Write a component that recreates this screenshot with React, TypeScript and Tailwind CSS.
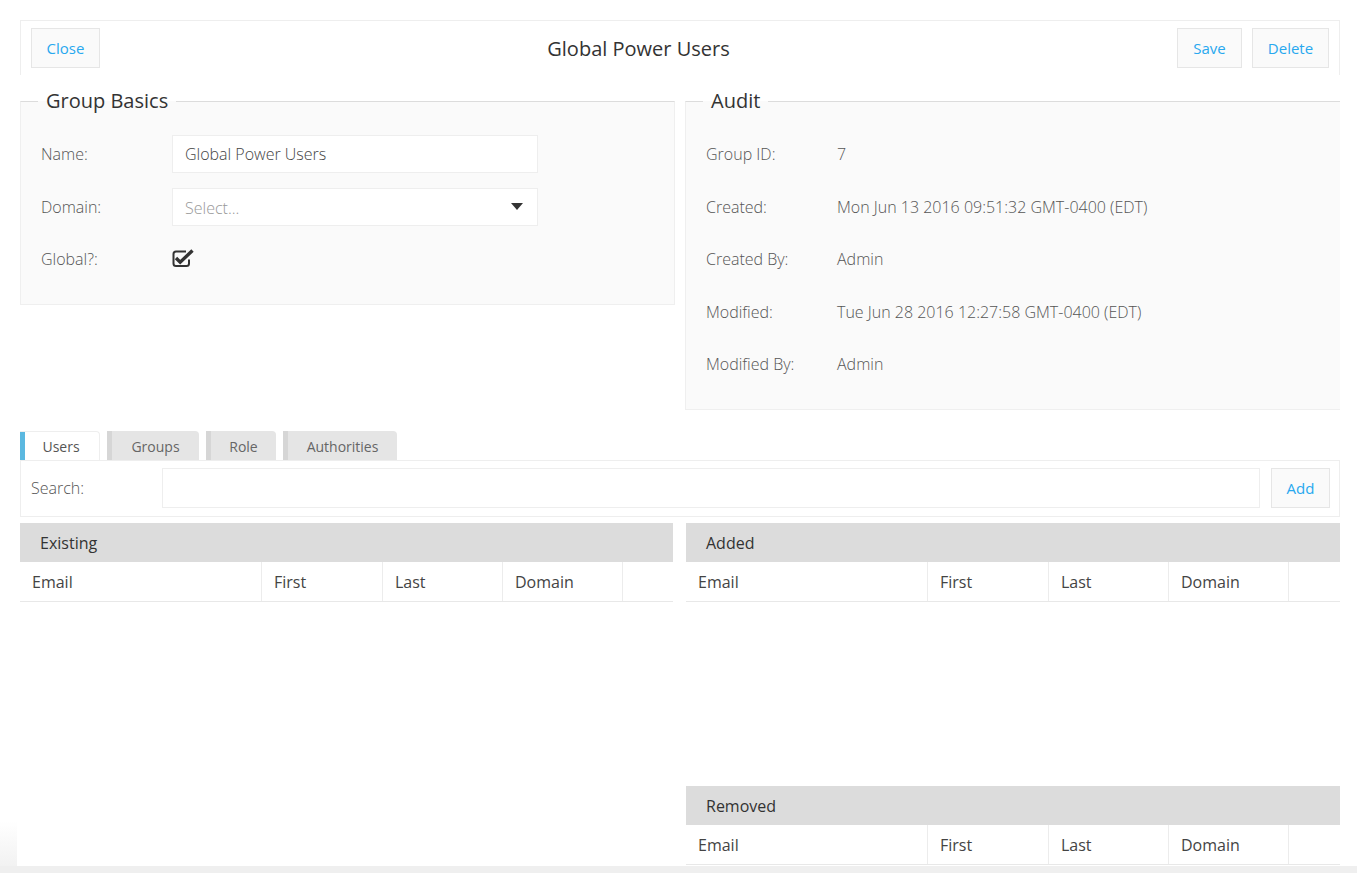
import React from "react";

const blue = "text-[#28a8ef]";

function Btn({ children, w }: { children: React.ReactNode; w: string }) {
  return (
    <button
      className={`h-[40px] ${w} border border-[#e6e6e6] bg-[#fafafa] text-[15px] ${blue} flex items-center justify-center`}
    >
      {children}
    </button>
  );
}

function CheckSquare() {
  return (
    <svg width="22" height="18" viewBox="0 0 22 18">
      <path
        d="M14 2.5 H4 Q1.5 2.5 1.5 5 V14.5 Q1.5 17 4 17 H14.5 Q17 17 17 14.5 V10.5"
        fill="none"
        stroke="#333"
        strokeWidth="2"
      />
      <path d="M4 9 L8.2 13.2 L20.5 1.5" fill="none" stroke="#333" strokeWidth="3.4" />
    </svg>
  );
}

function Row({ label, children }: { label: string; children: React.ReactNode }) {
  return (
    <div className="flex items-center h-[52.5px]">
      <div className="w-[131px] shrink-0 text-[16px] font-light text-[#555]">{label}</div>
      <div className="flex-1 flex items-center">{children}</div>
    </div>
  );
}

function Table({ title }: { title: string }) {
  const cols = [
    { t: "Email", w: "w-[242px]" },
    { t: "First", w: "w-[121px]" },
    { t: "Last", w: "w-[120px]" },
    { t: "Domain", w: "w-[120px]" },
  ];
  return (
    <div className="flex flex-col">
      <div className="h-[39px] bg-[#dcdcdc] flex items-center pl-5 pt-[1px] text-[16px] text-[#333]">{title}</div>
      <div className="h-[40px] flex border-b border-[#e8e8e8] bg-white">
        {cols.map((c) => (
          <div key={c.t} className={`${c.w} border-r border-[#ececec] flex items-center pl-3 pt-[2px] text-[16px] text-[#444]`}>
            {c.t}
          </div>
        ))}
        <div className="flex-1" />
      </div>
    </div>
  );
}

export default function App() {
  return (
    <div
      className="relative w-[1357px] h-[873px] overflow-hidden bg-white pl-5 pr-[17px] pt-5"
      style={{ fontFamily: "'Open Sans', 'Noto Sans', sans-serif" }}
    >
      {/* Header */}
      <div className="h-[55px] border-t border-x border-[#eeeeee] flex items-start pt-[7px] px-[10px] relative">
        <Btn w="w-[69px]">Close</Btn>
        <div className="flex-1 text-center text-[20px] text-[#333] mt-[6px]">Global Power Users</div>
        <div className="flex gap-[10px]">
          <Btn w="w-[65px]">Save</Btn>
          <Btn w="w-[77px]">Delete</Btn>
        </div>
      </div>

      {/* Fieldsets */}
      <div className="flex gap-[10px] items-start mt-[13px]">
        <fieldset className="w-[655px] shrink-0 border border-[#efefef] border-t-[#dcdcdc] bg-[#fafafa] pl-5 pr-[136px] pt-[14px] pb-[18px] m-0 min-w-0">
          <legend className="ml-[-3px] px-2 text-[20px] text-[#333] leading-[26px]">Group Basics</legend>
          <Row label="Name:">
            <div className="w-full h-[38px] bg-white border border-[#eeeeee] flex items-center pl-3 text-[16px] font-light text-[#444]">
              Global Power Users
            </div>
          </Row>
          <Row label="Domain:">
            <div className="w-full h-[38px] bg-white border border-[#eeeeee] flex items-center pl-3 pr-[14px] text-[16px] font-light text-[#999]">
              <span className="flex-1 pt-[3px]">Select...</span>
              <svg width="12" height="7" viewBox="0 0 12 7">
                <path d="M0 0 H12 L6 7 Z" fill="#333" />
              </svg>
            </div>
          </Row>
          <Row label="Global?:">
            <div className="mt-[-3px]">
              <CheckSquare />
            </div>
          </Row>
        </fieldset>

        <fieldset className="flex-1 border border-[#efefef] border-t-[#dcdcdc] border-r-0 bg-[#fafafa] pl-5 pr-5 pt-[14px] pb-[18px] m-0 min-w-0">
          <legend className="ml-[-3px] px-2 text-[20px] text-[#333] leading-[26px]">Audit</legend>
          <Row label="Group ID:"><span className="text-[16px] font-light text-[#555]">7</span></Row>
          <Row label="Created:"><span className="text-[16px] font-light text-[#555]">Mon Jun 13 2016 09:51:32 GMT-0400 (EDT)</span></Row>
          <Row label="Created By:"><span className="text-[16px] font-light text-[#555]">Admin</span></Row>
          <Row label="Modified:"><span className="text-[16px] font-light text-[#555]">Tue Jun 28 2016 12:27:58 GMT-0400 (EDT)</span></Row>
          <Row label="Modified By:"><span className="text-[16px] font-light text-[#555]">Admin</span></Row>
        </fieldset>
      </div>

      {/* Tabs */}
      <div className="flex gap-[7px] mt-[21px] h-[29px] items-end">
        <div className="h-[29px] w-[80px] bg-white border-t border-r border-[#eeeeee] rounded-tr-[4px] flex items-center">
          <div className="w-[5px] h-full bg-[#5bb8e0]" />
          <span className="flex-1 text-center text-[14px] text-[#555] pr-[2px] pt-[2px]">Users</span>
        </div>
        {[
          { t: "Groups", w: "w-[92px]" },
          { t: "Role", w: "w-[70px]" },
          { t: "Authorities", w: "w-[114px]" },
        ].map((x) => (
          <div key={x.t} className={`h-[29px] ${x.w} bg-[#e5e5e5] rounded-tr-[4px] flex items-center border-l-[5px] border-[#d6d6d6]`}>
            <span className="flex-1 text-center text-[14px] text-[#666] pt-[2px]">{x.t}</span>
          </div>
        ))}
      </div>

      {/* Search */}
      <div className="h-[57px] border border-[#eeeeee] flex items-center pl-[10px] pr-[9px]">
        <div className="w-[131px] text-[16px] font-light text-[#555]">Search:</div>
        <div className="flex-1 h-[40px] border border-[#eeeeee] bg-white" />
        <div className="ml-[11px]">
          <Btn w="w-[59px]">Add</Btn>
        </div>
      </div>

      {/* Tables */}
      <div className="flex gap-[13px] mt-[6px]">
        <div className="w-[653px] h-[344px] flex flex-col">
          <Table title="Existing" />
        </div>
        <div className="flex-1 flex flex-col">
          <div className="h-[263px]">
            <Table title="Added" />
          </div>
          <Table title="Removed" />
        </div>
      </div>

      {/* bottom shadow */}
      <div className="absolute left-0 right-0 bottom-0 h-[7px] bg-[#efefef]" />
      <div className="absolute left-0 bottom-[7px] w-[17px] h-[45px] bg-gradient-to-b from-white to-[#f2f2f2]" />
    </div>
  );
}
